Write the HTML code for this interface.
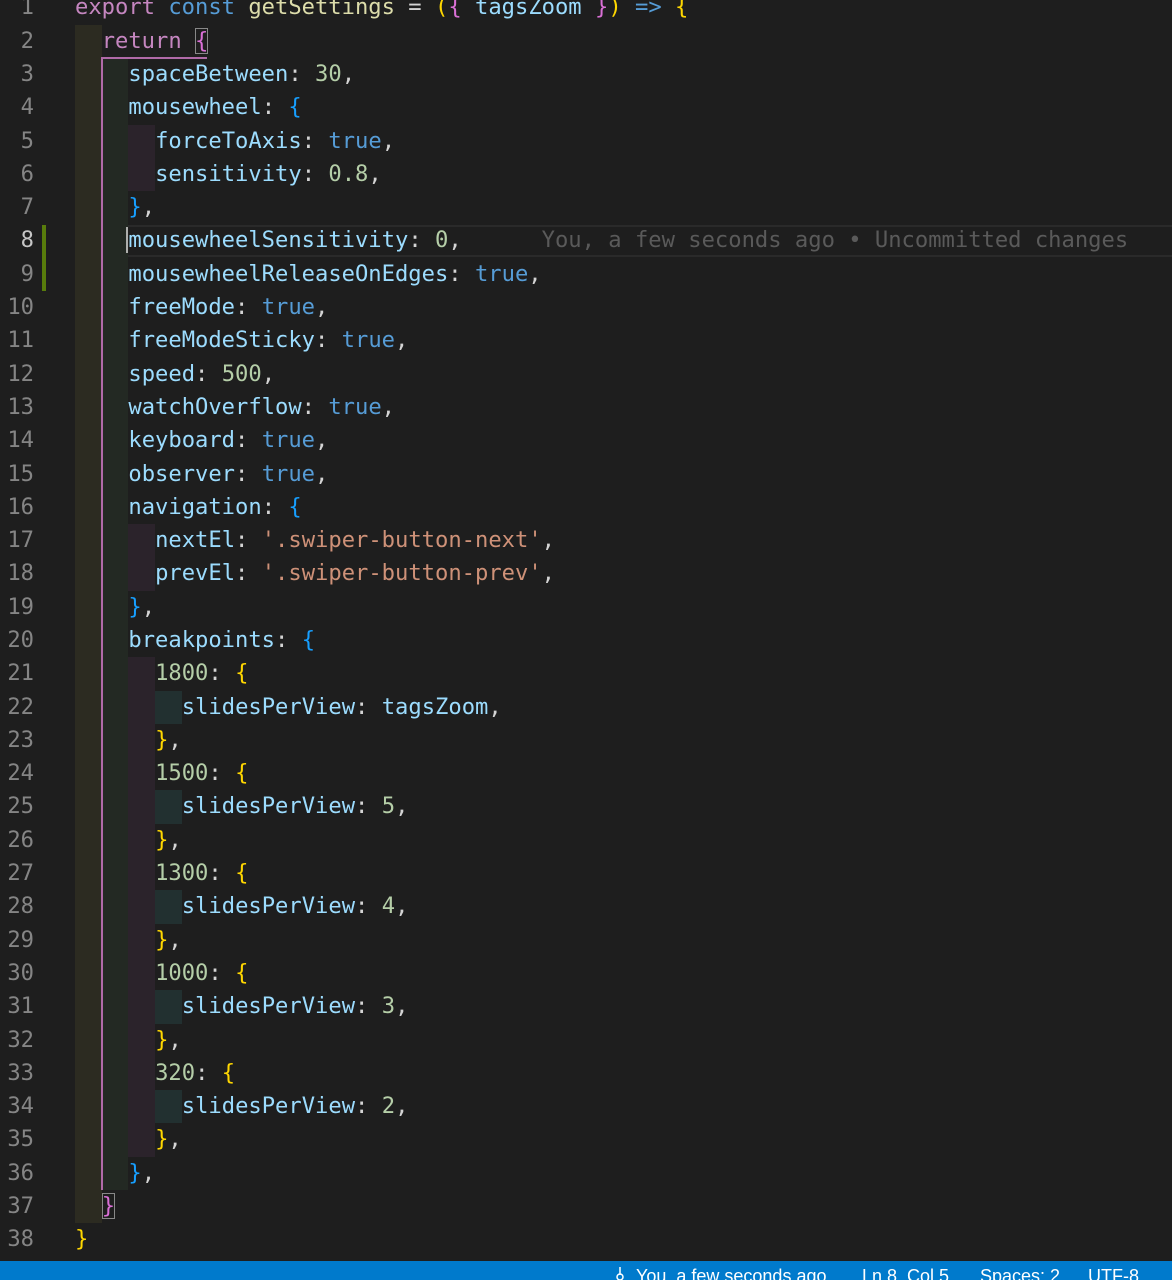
<!DOCTYPE html>
<html><head><meta charset="utf-8"><style>
html,body{margin:0;padding:0;background:#1e1e1e;width:1172px;height:1280px;overflow:hidden}
body{position:relative;font-family:"DejaVu Sans Mono","Liberation Mono",monospace;font-size:22.15px;}
#code{position:absolute;left:0;top:-8.65px;width:1172px}
.r{height:33.3px;line-height:33.3px;white-space:pre;position:relative;color:#d4d4d4}
.n{position:absolute;left:0;width:34px;text-align:right;color:#858585}
.t{position:absolute;left:75px}
.i{display:inline-block;width:26.7px;height:33.3px;vertical-align:top}
.a{background:#2c2b21}.b{background:#232923}.c{background:#2b232b}.d{background:#223030}
.k{color:#c586c0}.s{color:#569cd6}.f{color:#dcdcaa}.p{color:#9cdcfe}.m{color:#b5cea8}.q{color:#ce9178}
.g{color:#ffd700}.o{color:#da70d6}.u{color:#179fff}
.bx{outline:1.5px solid #888;outline-offset:-1px}
</style></head><body>
<div style="position:absolute;left:75px;top:224.5px;width:1097px;height:32px;border-top:2px solid #2a2a2a;border-bottom:2px solid #2a2a2a;box-sizing:border-box"></div>
<div style="position:absolute;left:42px;top:225px;width:4px;height:66px;background:#587c0c"></div>
<div id="code">
<div class="r"><span class="n">1</span><span class="t"><span class="k">export</span> <span class="s">const</span> <span class="f">getSettings</span> = <span class="g">(</span><span class="o">{</span> <span class="p">tagsZoom</span> <span class="o">}</span><span class="g">)</span> <span class="s">=&gt;</span> <span class="g">{</span></span></div>
<div class="r"><span class="n">2</span><span class="t"><span class="i a"></span><span class="k">return</span> <span class="o bx">{</span></span></div>
<div class="r"><span class="n">3</span><span class="t"><span class="i a"></span><span class="i b"></span><span class="p">spaceBetween</span>: <span class="m">30</span>,</span></div>
<div class="r"><span class="n">4</span><span class="t"><span class="i a"></span><span class="i b"></span><span class="p">mousewheel</span>: <span class="u">{</span></span></div>
<div class="r"><span class="n">5</span><span class="t"><span class="i a"></span><span class="i b"></span><span class="i c"></span><span class="p">forceToAxis</span>: <span class="s">true</span>,</span></div>
<div class="r"><span class="n">6</span><span class="t"><span class="i a"></span><span class="i b"></span><span class="i c"></span><span class="p">sensitivity</span>: <span class="m">0.8</span>,</span></div>
<div class="r"><span class="n">7</span><span class="t"><span class="i a"></span><span class="i b"></span><span class="u">}</span>,</span></div>
<div class="r"><span class="n" style="color:#c6c6c6">8</span><span class="t"><span class="i a"></span><span class="i b"></span><span class="p" style="border-left:2px solid #aeafad;margin-left:-2px">mousewheelSensitivity</span>: <span class="m">0</span>,      <span style="color:#5a5a5a">You, a few seconds ago • Uncommitted changes</span></span></div>
<div class="r"><span class="n">9</span><span class="t"><span class="i a"></span><span class="i b"></span><span class="p">mousewheelReleaseOnEdges</span>: <span class="s">true</span>,</span></div>
<div class="r"><span class="n">10</span><span class="t"><span class="i a"></span><span class="i b"></span><span class="p">freeMode</span>: <span class="s">true</span>,</span></div>
<div class="r"><span class="n">11</span><span class="t"><span class="i a"></span><span class="i b"></span><span class="p">freeModeSticky</span>: <span class="s">true</span>,</span></div>
<div class="r"><span class="n">12</span><span class="t"><span class="i a"></span><span class="i b"></span><span class="p">speed</span>: <span class="m">500</span>,</span></div>
<div class="r"><span class="n">13</span><span class="t"><span class="i a"></span><span class="i b"></span><span class="p">watchOverflow</span>: <span class="s">true</span>,</span></div>
<div class="r"><span class="n">14</span><span class="t"><span class="i a"></span><span class="i b"></span><span class="p">keyboard</span>: <span class="s">true</span>,</span></div>
<div class="r"><span class="n">15</span><span class="t"><span class="i a"></span><span class="i b"></span><span class="p">observer</span>: <span class="s">true</span>,</span></div>
<div class="r"><span class="n">16</span><span class="t"><span class="i a"></span><span class="i b"></span><span class="p">navigation</span>: <span class="u">{</span></span></div>
<div class="r"><span class="n">17</span><span class="t"><span class="i a"></span><span class="i b"></span><span class="i c"></span><span class="p">nextEl</span>: <span class="q">'.swiper-button-next'</span>,</span></div>
<div class="r"><span class="n">18</span><span class="t"><span class="i a"></span><span class="i b"></span><span class="i c"></span><span class="p">prevEl</span>: <span class="q">'.swiper-button-prev'</span>,</span></div>
<div class="r"><span class="n">19</span><span class="t"><span class="i a"></span><span class="i b"></span><span class="u">}</span>,</span></div>
<div class="r"><span class="n">20</span><span class="t"><span class="i a"></span><span class="i b"></span><span class="p">breakpoints</span>: <span class="u">{</span></span></div>
<div class="r"><span class="n">21</span><span class="t"><span class="i a"></span><span class="i b"></span><span class="i c"></span><span class="m">1800</span>: <span class="g">{</span></span></div>
<div class="r"><span class="n">22</span><span class="t"><span class="i a"></span><span class="i b"></span><span class="i c"></span><span class="i d"></span><span class="p">slidesPerView</span>: <span class="p">tagsZoom</span>,</span></div>
<div class="r"><span class="n">23</span><span class="t"><span class="i a"></span><span class="i b"></span><span class="i c"></span><span class="g">}</span>,</span></div>
<div class="r"><span class="n">24</span><span class="t"><span class="i a"></span><span class="i b"></span><span class="i c"></span><span class="m">1500</span>: <span class="g">{</span></span></div>
<div class="r"><span class="n">25</span><span class="t"><span class="i a"></span><span class="i b"></span><span class="i c"></span><span class="i d"></span><span class="p">slidesPerView</span>: <span class="m">5</span>,</span></div>
<div class="r"><span class="n">26</span><span class="t"><span class="i a"></span><span class="i b"></span><span class="i c"></span><span class="g">}</span>,</span></div>
<div class="r"><span class="n">27</span><span class="t"><span class="i a"></span><span class="i b"></span><span class="i c"></span><span class="m">1300</span>: <span class="g">{</span></span></div>
<div class="r"><span class="n">28</span><span class="t"><span class="i a"></span><span class="i b"></span><span class="i c"></span><span class="i d"></span><span class="p">slidesPerView</span>: <span class="m">4</span>,</span></div>
<div class="r"><span class="n">29</span><span class="t"><span class="i a"></span><span class="i b"></span><span class="i c"></span><span class="g">}</span>,</span></div>
<div class="r"><span class="n">30</span><span class="t"><span class="i a"></span><span class="i b"></span><span class="i c"></span><span class="m">1000</span>: <span class="g">{</span></span></div>
<div class="r"><span class="n">31</span><span class="t"><span class="i a"></span><span class="i b"></span><span class="i c"></span><span class="i d"></span><span class="p">slidesPerView</span>: <span class="m">3</span>,</span></div>
<div class="r"><span class="n">32</span><span class="t"><span class="i a"></span><span class="i b"></span><span class="i c"></span><span class="g">}</span>,</span></div>
<div class="r"><span class="n">33</span><span class="t"><span class="i a"></span><span class="i b"></span><span class="i c"></span><span class="m">320</span>: <span class="g">{</span></span></div>
<div class="r"><span class="n">34</span><span class="t"><span class="i a"></span><span class="i b"></span><span class="i c"></span><span class="i d"></span><span class="p">slidesPerView</span>: <span class="m">2</span>,</span></div>
<div class="r"><span class="n">35</span><span class="t"><span class="i a"></span><span class="i b"></span><span class="i c"></span><span class="g">}</span>,</span></div>
<div class="r"><span class="n">36</span><span class="t"><span class="i a"></span><span class="i b"></span><span class="u">}</span>,</span></div>
<div class="r"><span class="n">37</span><span class="t"><span class="i a"></span><span class="o bx">}</span></span></div>
<div class="r"><span class="n">38</span><span class="t"><span class="g">}</span></span></div>
</div>
<div style="position:absolute;left:101px;top:57px;width:1.5px;height:1133px;background:#b06aa8"></div>
<div style="position:absolute;left:101px;top:57px;width:106px;height:1.5px;background:#b06aa8"></div>
<div style="position:absolute;left:0;top:1261px;width:1172px;height:19px;background:#007acc;color:#fff;font-family:'Liberation Sans',sans-serif;font-size:18px;line-height:30px;white-space:pre;overflow:hidden">
<svg style="position:absolute;left:613px;top:6px" width="14" height="14" viewBox="0 0 14 14"><line x1="7" y1="0" x2="7" y2="8" stroke="#fff" stroke-width="1.5"/><circle cx="7" cy="10" r="3" fill="none" stroke="#fff" stroke-width="1.5"/></svg>
<span style="position:absolute;left:636px;top:0">You, a few seconds ago</span><span style="position:absolute;left:862px;top:0">Ln 8, Col 5</span><span style="position:absolute;left:980px;top:0">Spaces: 2</span><span style="position:absolute;left:1088px;top:0">UTF-8</span>
</div>
</body></html>
